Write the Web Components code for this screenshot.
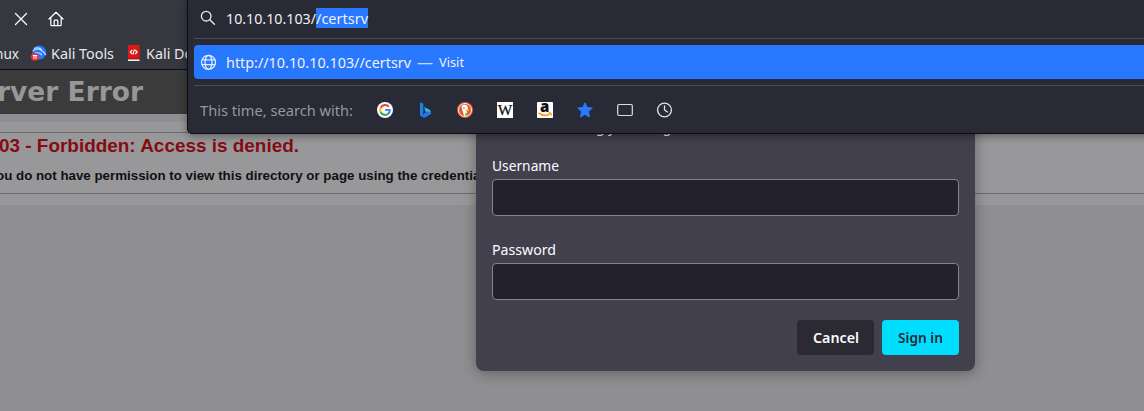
<!DOCTYPE html>
<html lang="en"><head><meta charset="utf-8"><title>Server Error</title>
<style>html,body{margin:0;height:100%;overflow:hidden;background:#8e8e90}body{font-family:"Noto Sans",sans-serif}</style></head><body>
<browser-window></browser-window>
<script>
const define=(name,html,init)=>customElements.define(name,class extends HTMLElement{
  connectedCallback(){ if(this.shadowRoot)return; this.attachShadow({mode:'open'}).innerHTML=html; if(init)init(this); }
});
/* One line of text, condensed so that it fills the width given by its "w" attribute. */
define('fit-text','<style>:host{display:block;white-space:pre;flex:none}span{display:inline-block;transform-origin:0 50%}</style><span><slot></slot></span>',el=>{
  const w=+el.getAttribute('w'), s=el.shadowRoot.querySelector('span');
  if(w){const n=s.getBoundingClientRect().width; s.style.transform='scaleX('+w/n+')'; s.style.marginRight=(w-n)+'px'; el.style.width=w+'px';}
});
const icons={
close:'<path d="M2.5 2.5l11 11m0-11l-11 11" stroke="#fbfbfe" stroke-width="1.3" stroke-linecap="round"/>',
home:'<path d="M1 8L8 1.3 15 8M2.8 6.7v7q0 1 1 1h8.4q1 0 1-1v-7M6.2 14.5V10q0-.8.8-.8h2q.8 0 .8.8v4.5" fill="none" stroke="#fbfbfe" stroke-width="1.25" stroke-linecap="round" stroke-linejoin="round"/>',
tools:'<circle cx="8.2" cy="7.5" r="7" fill="#2777ff"/><path d="M2 6q5-4 9 0 2 1 4 4M3 3.5q5-2 8 1.5M4 8q4-1 7 2" fill="none" stroke="#c9e2ff" stroke-width="1.1"/><circle cx="3.9" cy="11.8" r="3.9" fill="#ee3338"/><path d="M1.8 10.5h4.4M3 10.5v3.3m2-3.3v3.3" stroke="#fff" stroke-width="1"/>',
docs:'<path d="M2 0h11.5v14H2z" fill="#dc1717"/><path d="M2 14h11.5v2H2z" fill="#eee"/><path d="M2 13.2h11.5v1.2H2z" fill="#a50e12"/><path d="M6.2 5L4.3 7l1.9 2m3-4l1.9 2-1.9 2M8.4 4.3L7 9.7" fill="none" stroke="#fff" stroke-width="1.1"/>',
search:'<circle cx="6.2" cy="6.2" r="4.8" fill="none" stroke="#e9e9ee" stroke-width="1.3"/><path d="M9.8 9.8l4.6 4.4" stroke="#e9e9ee" stroke-width="1.4" stroke-linecap="round"/>',
globe:'<g fill="none" stroke="#e4edff" stroke-width="1.25"><circle cx="8.5" cy="8.3" r="7"/><ellipse cx="8.5" cy="8.3" rx="3.5" ry="7"/><path d="M1.8 5.9h13.4M1.8 10.7h13.4"/></g>',
google:'<circle cx="8" cy="8" r="8" fill="#fff"/><g fill="none" stroke-width="2.1"><path d="M11.8 4.7A4.9 4.9 0 0 0 3.7 5.7" stroke="#ea4335"/><path d="M3.7 5.7a4.9 4.9 0 0 0 0 4.6" stroke="#fbbc05"/><path d="M3.7 10.3a4.9 4.9 0 0 0 7.5 1.4" stroke="#34a853"/><path d="M11.2 11.7A4.6 4.6 0 0 0 12.8 8H8.2" stroke="#4285f4"/></g>',
bing:'<defs><linearGradient id="b" x1="0" y1="0" x2="1" y2="1"><stop stop-color="#27aaf5"/><stop offset="1" stop-color="#35d4f0"/></linearGradient></defs><path d="M3 .3l2.7 1q.6.3.6 1v8.8L3.4 14Q3 13 3 12z" fill="#1782e9"/><path d="M7 5l5.2 2.6q2.6 1.8.9 5.1L8.5 9.5z" fill="url(#b)"/><path d="M3 12.2q.5 2.4 3.2 3.4 1.5.4 2.8-.5l4-2.5q1-1.3.5-2.6L11 9l-5 3.2z" fill="#2478ec"/>',
duck:'<circle cx="8" cy="8" r="8" fill="#de5833"/><circle cx="8" cy="8" r="6.5" fill="none" stroke="#fff" stroke-width=".9"/><path d="M4.6 5.4q0-2.8 3-2.6 3.2.3 3.4 3.6l.3 2-1.5.7.6 4.2-3.4.5Z" fill="#fff"/><circle cx="7" cy="6" r=".7" fill="#2d4f8e"/><path d="M8.3 7.4q2-.4 4.2.2-.3 1.6-4 1.6z" fill="#fdc70a"/><path d="M8 10.8l4 .6-1 2.2-2.5-.5z" fill="#65bc46"/>',
wiki:'<path d="M0 0h16v16H0z" fill="#fff"/><text x="8" y="12.7" text-anchor="middle" textLength="14.6" lengthAdjust="spacingAndGlyphs" font-family="Liberation Serif,serif" font-size="14.5" fill="#111" stroke="#111" stroke-width=".25">W</text>',
amazon:'<rect width="16" height="16" rx=".7" fill="#fff"/><text x="7.6" y="10" text-anchor="middle" font-family="Open Sans,sans-serif" font-weight="800" font-size="15" fill="#111">a</text><path d="M1.5 10.8q6.2 4.9 12 .8" fill="none" stroke="#f90" stroke-width="1.5"/><path d="M11.3 10.8q3.8-1 3 2.8" fill="none" stroke="#f90" stroke-width="1"/>',
star:'<path d="M8 .8l2.1 4.7 5.2.5-3.8 3.6 1 5.4L8 12.3 3.5 15l1-5.4L.7 6l5.2-.5z" fill="#2a7aff" stroke="#2a7aff" stroke-width="1" stroke-linejoin="round"/>',
tab:'<rect x=".7" y="2.5" width="14.6" height="11" rx="1.2" fill="none" stroke="#dcdce0" stroke-width="1.2"/>',
clock:'<circle cx="7.5" cy="8" r="6.9" fill="none" stroke="#e4e4e8" stroke-width="1.3"/><path d="M7.5 4v4l3 2" fill="none" stroke="#e4e4e8" stroke-width="1.3" stroke-linecap="round"/>'
};
define('ui-icon','<style>:host{display:block;width:16px;height:16px;flex:none}svg{display:block}</style><div></div>',el=>{
  el.shadowRoot.querySelector('div').innerHTML='<svg width="16" height="16" viewBox="0 0 16 16">'+icons[el.getAttribute('name')]+'</svg>';
});
define('browser-toolbar',`<style>:host{display:flex;flex-direction:column;box-sizing:border-box;height:70px;background:#363840;border-bottom:1px solid #0d0d12;color:#e8e8ea;font-size:15px;line-height:20px}
.nav{display:flex;gap:19px;padding:11px 0 0 13px;height:26px}.marks{display:flex;align-items:center;height:32px}
.first{margin-left:-5px}.a{margin:0 4px 0 12px}.b{margin:0 4px 0 12px}</style>
<div class="nav"><ui-icon name="close"></ui-icon><ui-icon name="home"></ui-icon></div>
<div class="marks"><fit-text class="first" w="24">nux</fit-text><ui-icon class="a" name="tools"></ui-icon><fit-text w="63">Kali Tools</fit-text><ui-icon class="b" name="docs"></ui-icon><fit-text w="61">Kali Docs</fit-text></div>`);
define('error-page',`<style>:host{display:block;height:341px;background:#8f8f91}
header{box-sizing:border-box;height:44px;background:#3b3b3b;color:#979799;font:bold 26.7px/44px "DejaVu Sans",sans-serif}
.content{box-sizing:border-box;margin-top:8px;height:83px;background:#98989a;padding-top:10px}
section{box-sizing:border-box;height:62px;border:solid #6b6b6d;border-width:1px 0;font-family:"Liberation Sans",sans-serif}
h2{margin:2px 0 0 -1px;font-size:19px;line-height:22px;color:#850c12}h3{margin:9px 0 0 -4px;font-size:13.33px;line-height:20px;color:#101011}
header fit-text{margin-left:-3px}</style>
<header><fit-text w="146">rver Error</fit-text></header><div class="content"><section><h2><fit-text w="300">03 - Forbidden: Access is denied.</fit-text></h2><h3><fit-text>ou do not have permission to view this directory or page using the credentials</fit-text></h3></section></div>`);
define('sign-field',`<style>:host{display:block;color:#fbfbfe;font-size:15px;line-height:20px}.box{box-sizing:border-box;height:37px;margin-top:4px;border:1px solid #85848d;border-radius:4px;background:#23212b}</style><slot></slot><div class="box"></div>`);
define('ui-button',`<style>:host{box-sizing:border-box;display:flex;align-items:center;justify-content:center;width:77px;height:35px;padding-bottom:1px;border-radius:4px;background:#2b2a33;color:#fbfbfe;font-size:15px;line-height:20px;font-weight:600}:host([primary]){background:#00ddff;color:#2b2a33}</style><slot></slot>`);
define('sign-dialog',`<style>:host{position:absolute;left:476px;top:60px;box-sizing:border-box;width:499px;height:311px;padding:56px 16px 16px;border-radius:8px;background:#42404d;box-shadow:0 2px 14px #0005;color:#fbfbfe;font-size:15px;line-height:20px}
sign-field{margin-top:19px}.second{margin-top:23px}.actions{display:flex;justify-content:flex-end;gap:8px;margin-top:20px}</style>
<fit-text w="207">This site is asking you to sign in.</fit-text>
<sign-field><fit-text w="67">Username</fit-text></sign-field><sign-field class="second"><fit-text w="64">Password</fit-text></sign-field>
<div class="actions"><ui-button><fit-text w="46">Cancel</fit-text></ui-button><ui-button primary><fit-text w="45">Sign in</fit-text></ui-button></div>`);
define('url-popup',`<style>:host{position:absolute;left:187px;top:-5px;box-sizing:border-box;width:970px;height:139px;padding:5px 0 0 6px;border:1px solid #0c0c12;border-radius:5px;background:#282a35;box-shadow:0 2px 8px #0006;color:#f1f1f4;font-size:15px;line-height:20px}
.input{box-sizing:border-box;display:flex;align-items:center;height:37px;padding:0 0 3px 6px}.input ui-icon,.row ui-icon{margin-right:10px}.sel{background:#2777ff}
.line{height:1px;background:#4a4b55}.row{display:flex;align-items:center;height:34px;margin:6px 0;padding-left:6px;border-radius:4px;background:#2777ff}
.dash{margin:0 6px;opacity:.8}.visit{font-size:13px}.search{box-sizing:border-box;display:flex;align-items:center;gap:24px;height:49px;padding:0 0 1px 6px;color:#96979f}</style>
<div class="input"><ui-icon name="search"></ui-icon><fit-text w="90">10.10.10.103/</fit-text><fit-text class="sel" w="52">/certsrv</fit-text></div><div class="line"></div>
<div class="row"><ui-icon name="globe"></ui-icon><fit-text w="185">http://10.10.10.103//certsrv</fit-text><fit-text class="dash" w="16">—</fit-text><fit-text class="visit" w="25">Visit</fit-text></div><div class="line"></div>
<div class="search"><fit-text w="153">This time, search with:</fit-text>${['google','bing','duck','wiki','amazon','star','tab','clock'].map(n=>`<ui-icon name="${n}"></ui-icon>`).join('')}</div>`);
define('browser-window',`<style>:host{display:block;position:relative;width:1144px;height:411px;overflow:hidden}</style><browser-toolbar></browser-toolbar><error-page></error-page><sign-dialog></sign-dialog><url-popup></url-popup>`);
</script></body></html>
